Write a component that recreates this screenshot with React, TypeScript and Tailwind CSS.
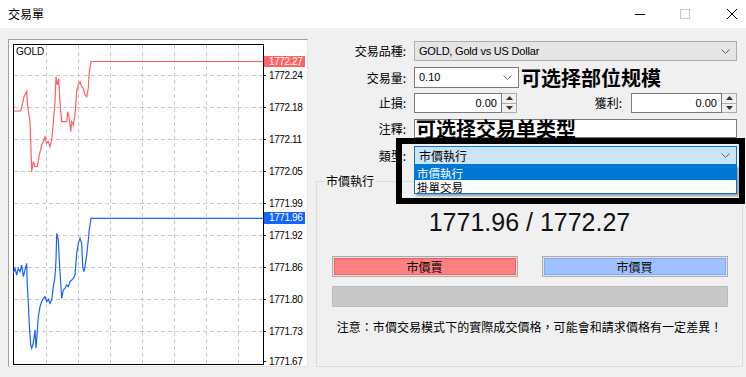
import React from "react";

const redPts: [number, number][] = [
  [13.5, 111], [20.7, 111], [22, 105.7], [24, 96.7], [26.7, 91.7], [27.7, 106.7], [30, 121.7], [30.7, 140], [31.7, 171.7],
  [33.3, 161.7], [35, 166.7], [37.3, 166.7], [39.3, 155], [41.7, 145], [43.3, 141.7], [45, 136.7], [46.7, 143.3], [48.3, 141.7],
  [50, 146.7], [51.7, 140], [53.3, 123.3], [55, 101.7], [56, 76.7], [57.3, 85], [58.7, 78.3], [60, 103.3], [61.7, 121.7],
  [66.7, 121.7], [67.7, 111.7], [69, 116.7], [70, 125], [70.7, 131.7], [71.7, 121.7], [73.3, 125], [75, 115], [76.7, 91.7],
  [78.3, 85], [80, 81.7], [81.7, 86.7], [83.3, 88.3], [85, 95], [86.7, 96.7], [88.3, 88.3], [89.3, 71.7], [91, 61.5], [263, 61.5],
];

const bluePts: [number, number][] = [
  [40, 220], [45, 205], [50, 225], [55, 205], [60, 215], [65, 195], [70, 230], [75, 210], [80, 190], [82, 255], [85, 310],
  [88, 375], [92, 435], [95, 445], [100, 430], [105, 390], [108, 445], [112, 395], [115, 350], [120, 320], [125, 305], [130, 295],
  [135, 290], [140, 305], [145, 298], [150, 310], [155, 300], [160, 260], [165, 230], [168, 180], [170, 100], [175, 120],
  [178, 180], [180, 215], [185, 295], [190, 270], [195, 265], [200, 255], [205, 260], [210, 245], [215, 240], [220, 235],
  [225, 225], [230, 160], [235, 130], [240, 115], [245, 130], [248, 200], [252, 215], [255, 200], [260, 165], [265, 120],
  [268, 90], [273, 55], [790, 55],
].map(([x, y]) => [x / 3, y / 3 + 200] as [number, number]);

const toPoints = (pts: [number, number][]) => pts.map(([x, y]) => `${x.toFixed(1)},${y.toFixed(1)}`).join(" ");

const gridX = [46, 78, 110, 142, 174, 206, 238];
const axis: { y: number; label: string }[] = [
  { y: 75, label: "1772.24" },
  { y: 107, label: "1772.18" },
  { y: 139, label: "1772.11" },
  { y: 171, label: "1772.05" },
  { y: 203, label: "1771.99" },
  { y: 235, label: "1771.92" },
  { y: 267, label: "1771.86" },
  { y: 299, label: "1771.80" },
  { y: 331, label: "1771.73" },
  { y: 361, label: "1771.67" },
];

function PriceChart() {
  return (
    <div className="ml-[8px] mt-[11px] h-[328px] w-[300px] border border-t-[#a0a0a0] border-l-[#a0a0a0] border-r-[#e3e3e3] border-b-[#e3e3e3] bg-white">
      <svg width="298" height="326" viewBox="9 40 298 326" className="block font-['Liberation_Sans',sans-serif]">
        {gridX.map((x) => (
          <line key={x} x1={x + 0.5} y1={45} x2={x + 0.5} y2={364} stroke="#c8c8c8" strokeDasharray="4 3" />
        ))}
        {axis.slice(0, 9).map((a) => (
          <line key={a.y} x1={14} y1={a.y + 0.5} x2={263} y2={a.y + 0.5} stroke="#c8c8c8" strokeDasharray="4 3" />
        ))}
        <rect x={13.5} y={44.5} width={250} height={320} fill="none" stroke="#000" />
        <text x={16} y={55} fontSize="10" fill="#000">GOLD</text>
        <polyline points={toPoints(redPts)} fill="none" stroke="#ff5f5f" strokeWidth="1.2" />
        <polyline points={toPoints(bluePts)} fill="none" stroke="#1464ff" strokeWidth="1.2" />
        {axis.map((a) => (
          <g key={a.label}>
            <line x1={263} y1={a.y + 0.5} x2={266} y2={a.y + 0.5} stroke="#000" />
            <text x={269} y={a.y + 4} fontSize="10" letterSpacing="-0.4" fill="#000">{a.label}</text>
          </g>
        ))}
        <rect x={264} y={56} width={41} height={11} fill="#ff6464" />
        <text x={269} y={65} fontSize="10" letterSpacing="-0.4" fill="#fff">1772.27</text>
        <rect x={264} y={212} width={41} height={12} fill="#1464ff" />
        <text x={269} y={221} fontSize="10" letterSpacing="-0.4" fill="#fff">1771.96</text>
      </svg>
    </div>
  );
}

function Chevron() {
  return (
    <svg width="9" height="5" viewBox="0 0 9 5" className="shrink-0">
      <path d="M0.5 0.5 L4.5 4.5 L8.5 0.5" fill="none" stroke="#606060" />
    </svg>
  );
}

function Spinner() {
  return (
    <div className="flex w-[15px] shrink-0 flex-col border border-l-0 border-[#adadad] bg-[#f0f0f0]">
      <div className="flex flex-1 items-center justify-center border-b border-[#adadad]">
        <svg width="7" height="4" viewBox="0 0 7 4"><path d="M0 4 L3.5 0 L7 4 Z" fill="#333" /></svg>
      </div>
      <div className="flex flex-1 items-center justify-center">
        <svg width="7" height="4" viewBox="0 0 7 4"><path d="M0 0 L3.5 4 L7 0 Z" fill="#333" /></svg>
      </div>
    </div>
  );
}

function Label({ text, width = "w-[96px]" }: { text: string; width?: string }) {
  return <span className={`${width} shrink-0 text-right text-[12px] leading-none text-black`}>{text}</span>;
}

function NumberField({ value, width }: { value: string; width: string }) {
  return (
    <div className={`flex h-full ${width}`}>
      <div className="flex flex-1 items-center justify-end border border-[#7a7a7a] bg-white pr-[4px] font-['Liberation_Sans',sans-serif] text-[11px] text-black">
        {value}
      </div>
      <Spinner />
    </div>
  );
}

export default function App() {
  return (
    <div className="relative h-[377px] w-[746px] overflow-hidden bg-[#f0f0f0] font-['Noto_Sans_CJK_TC','Noto_Sans',sans-serif] text-black">
      <div className="flex h-[28px] items-center bg-white pl-[8px]">
        <span className="text-[12px] leading-none">交易單</span>
        <div className="ml-auto flex items-center">
          <svg width="10" height="10" viewBox="0 0 10 10" className="mr-[35px]"><line x1="0" y1="5.5" x2="10" y2="5.5" stroke="#000" /></svg>
          <svg width="10" height="10" viewBox="0 0 10 10" className="mr-[37px]"><rect x="0.5" y="0.5" width="9" height="9" fill="none" stroke="#c8c8c8" /></svg>
          <svg width="10" height="10" viewBox="0 0 10 10" className="mr-[9px]"><path d="M0 0 L10 10 M10 0 L0 10" stroke="#000" strokeWidth="1" /></svg>
        </div>
      </div>

      <div className="flex">
        <PriceChart />

        <div className="ml-[2px] flex w-[436px] flex-col pt-[13px]">
          <div className="flex h-[20px] items-center pr-[9px]">
            <Label text="交易品種:" />
            <div className="ml-[8px] flex h-full flex-1 items-center border border-[#adadad] bg-[#e5e5e5] pl-[4px] pr-[6px]">
              <span className="flex-1 font-['Liberation_Sans',sans-serif] text-[11px] tracking-[-0.2px]">GOLD, Gold vs US Dollar</span>
              <Chevron />
            </div>
          </div>

          <div className="mt-[6px] flex h-[21px] items-center pr-[9px]">
            <Label text="交易量:" />
            <div className="ml-[8px] flex h-full w-[105px] items-center border border-[#7a7a7a] bg-white pl-[4px] pr-[6px]">
              <span className="flex-1 font-['Liberation_Sans',sans-serif] text-[11px]">0.10</span>
              <Chevron />
            </div>
            <span className="ml-[2px] font-['Noto_Sans_CJK_SC',sans-serif] text-[20px] font-bold leading-none">可选择部位规模</span>
          </div>

          <div className="mt-[5px] flex h-[20px] items-center pr-[9px]">
            <Label text="止損:" />
            <div className="ml-[8px] h-full">
              <NumberField value="0.00" width="w-[103px]" />
            </div>
            <span className="flex-1 pr-[9px] text-right text-[12px] leading-none">獲利:</span>
            <NumberField value="0.00" width="w-[106px]" />
          </div>

          <div className="mt-[6px] flex h-[19px] items-center pr-[9px]">
            <Label text="注釋:" />
            <div className="ml-[8px] flex h-full flex-1 items-center overflow-visible border border-[#7a7a7a] bg-white pl-[1px]">
              <span className="font-['Noto_Sans_CJK_SC',sans-serif] text-[20px] font-bold leading-[17px]">可选择交易单类型</span>
            </div>
          </div>

          <div className="mt-[8px] flex h-[19px] items-center pr-[9px]">
            <Label text="類型:" />
            <div className="ml-[8px] flex h-full flex-1 items-center border border-[#0078d7] bg-[#cce4f7] pl-[4px] pr-[6px]">
              <span className="flex-1 text-[12px] leading-none">市價執行</span>
              <Chevron />
            </div>
          </div>

          <div className="relative ml-[6px] mt-[16px] flex h-[186px] w-[427px] flex-col items-center border border-[#dcdcdc]">
            <span className="absolute -top-[9px] left-[8px] bg-[#f0f0f0] px-[1px] text-[12px] leading-[16px]">市價執行</span>
            <div className="mt-[25px] h-[30px] font-['Liberation_Sans',sans-serif] text-[25px] leading-[30px] text-[#111]">1771.96 / 1772.27</div>
            <div className="mt-[19px] flex w-[396px] justify-between">
              <div className="h-[21px] w-[186px] border border-[#adadad] bg-[#e1e1e1] p-[1px]">
                <div className="flex h-full items-center justify-center border border-[#f06262] bg-[#ff8080] text-[12px] leading-none">市價賣</div>
              </div>
              <div className="h-[21px] w-[186px] border border-[#adadad] bg-[#e1e1e1] p-[1px]">
                <div className="flex h-full items-center justify-center border border-[#80a8ff] bg-[#a0c0ff] text-[12px] leading-none">市價買</div>
              </div>
            </div>
            <div className="mt-[9px] h-[21px] w-[396px] border border-[#bcbcbc] bg-[#c8c8c8]" />
            <div className="mt-[12px] text-[12px] leading-[16px] tracking-[0.05px]">注意：市價交易模式下的實際成交價格，可能會和請求價格有一定差異！</div>
          </div>
        </div>
      </div>

      <div className="absolute left-[396px] top-[138px] h-[66px] w-[349px] border-[6px] border-black" />
      <div className="absolute left-[414px] top-[165px] flex h-[29px] w-[323px] flex-col border border-[#0078d7] bg-white shadow-[2px_2px_2px_rgba(0,0,0,0.35)]">
        <div className="flex h-[14px] items-center overflow-hidden bg-[#0078d7] pl-[2px] text-[11.5px] leading-[12px] text-white">市價執行</div>
        <div className="flex h-[13px] items-center overflow-hidden pl-[2px] text-[11.5px] leading-[12px]">掛單交易</div>
      </div>
    </div>
  );
}
